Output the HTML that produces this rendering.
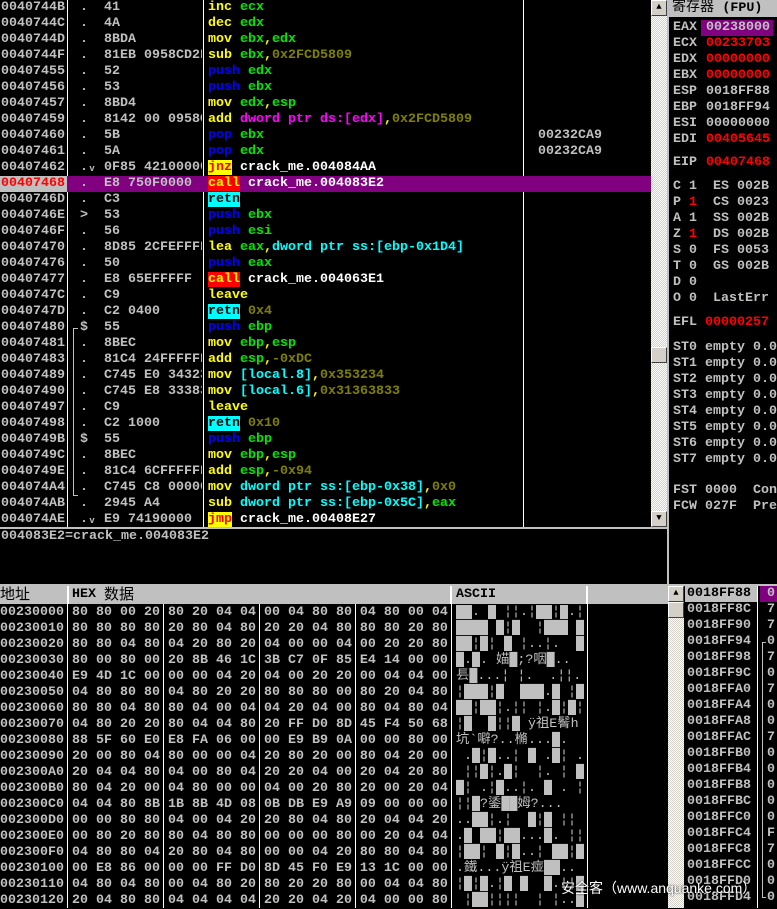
<!DOCTYPE html>
<html><head><meta charset="utf-8"><style>
*{margin:0;padding:0;box-sizing:border-box}
body{width:777px;height:908px;background:#000;position:relative;overflow:hidden;font:bold 13.33px/16px "Liberation Mono","WenQuanYi Zen Hei",monospace;color:#c0c0c0}
div,span{position:absolute;white-space:pre}
.r{left:0;width:651px;height:16px}
.a{left:1px}.d{left:80px}.h{left:104px;width:98px;overflow:hidden}.i{left:208px}.c{left:538px}
.y{position:static;color:#ffff00}.g{position:static;color:#00e800}.o{position:static;color:#808000}.b{position:static;color:#0000ff}
.m{position:static;color:#ff00ff}.cy{position:static;color:#00ffff}.w{position:static;color:#fff}
.jz{position:static;background:#ffff00;color:#ff0000}.cl{position:static;background:#ff0000;color:#ffff00}.rt{position:static;background:#00ffff;color:#000}
.vl{width:1px;background:#fff}
.sb{background:repeating-conic-gradient(#fff 0 25%,#d4d0c8 0 50%) 0 0/2px 2px}
.btn{background:#d4d0c8;border:1px solid;border-color:#fff #404040 #404040 #fff;width:16px;height:16px}
.rg{left:673px}.rv{left:706px}
</style></head><body>
<!-- disassembly -->
<div class="vl" style="left:67px;top:0;height:527px"></div>
<div class="vl" style="left:203px;top:0;height:527px"></div>
<div class="vl" style="left:523px;top:0;height:527px"></div>
<div class="r" style="top:0"><span class="a">0040744B</span><span class="d">.</span><span class="h">41</span><span class="i"><span class="y">inc</span> <span class="g">ecx</span></span></div>
<div class="r" style="top:16px"><span class="a">0040744C</span><span class="d">.</span><span class="h">4A</span><span class="i"><span class="y">dec</span> <span class="g">edx</span></span></div>
<div class="r" style="top:32px"><span class="a">0040744D</span><span class="d">.</span><span class="h">8BDA</span><span class="i"><span class="y">mov</span> <span class="g">ebx</span><span class="y">,</span><span class="g">edx</span></span></div>
<div class="r" style="top:48px"><span class="a">0040744F</span><span class="d">.</span><span class="h">81EB 0958CD2F</span><span class="i"><span class="y">sub</span> <span class="g">ebx</span><span class="y">,</span><span class="o">0x2FCD5809</span></span></div>
<div class="r" style="top:64px"><span class="a">00407455</span><span class="d">.</span><span class="h">52</span><span class="i"><span class="b">push</span> <span class="g">edx</span></span></div>
<div class="r" style="top:80px"><span class="a">00407456</span><span class="d">.</span><span class="h">53</span><span class="i"><span class="b">push</span> <span class="g">ebx</span></span></div>
<div class="r" style="top:96px"><span class="a">00407457</span><span class="d">.</span><span class="h">8BD4</span><span class="i"><span class="y">mov</span> <span class="g">edx</span><span class="y">,</span><span class="g">esp</span></span></div>
<div class="r" style="top:112px"><span class="a">00407459</span><span class="d">.</span><span class="h">8142 00 0958CD2F</span><span class="i"><span class="y">add</span> <span class="m">dword ptr ds:[edx]</span><span class="y">,</span><span class="o">0x2FCD5809</span></span></div>
<div class="r" style="top:128px"><span class="a">00407460</span><span class="d">.</span><span class="h">5B</span><span class="i"><span class="b">pop</span> <span class="g">ebx</span></span><span class="c">00232CA9</span></div>
<div class="r" style="top:144px"><span class="a">00407461</span><span class="d">.</span><span class="h">5A</span><span class="i"><span class="b">pop</span> <span class="g">edx</span></span><span class="c">00232CA9</span></div>
<div class="r" style="top:160px"><span class="a">00407462</span><span class="d">.ᵥ</span><span class="h">0F85 42100000</span><span class="i"><span class="jz">jnz</span> <span class="w">crack_me.004084AA</span></span></div>
<div class="r" style="top:176px;background:#800080"><span class="a" style="left:0;width:67px;background:#c0c0c0;color:#f00;padding-left:1px">00407468</span><span class="d">.</span><span class="h">E8 750F0000</span><span class="i"><span class="cl">call</span> <span class="w">crack_me.004083E2</span></span></div>
<div class="r" style="top:192px"><span class="a">0040746D</span><span class="d">.</span><span class="h">C3</span><span class="i"><span class="rt">retn</span></span></div>
<div class="r" style="top:208px"><span class="a">0040746E</span><span class="d">&gt;</span><span class="h">53</span><span class="i"><span class="b">push</span> <span class="g">ebx</span></span></div>
<div class="r" style="top:224px"><span class="a">0040746F</span><span class="d">.</span><span class="h">56</span><span class="i"><span class="b">push</span> <span class="g">esi</span></span></div>
<div class="r" style="top:240px"><span class="a">00407470</span><span class="d">.</span><span class="h">8D85 2CFEFFFF</span><span class="i"><span class="y">lea</span> <span class="g">eax</span><span class="y">,</span><span class="cy">dword ptr ss:[ebp-0x1D4]</span></span></div>
<div class="r" style="top:256px"><span class="a">00407476</span><span class="d">.</span><span class="h">50</span><span class="i"><span class="b">push</span> <span class="g">eax</span></span></div>
<div class="r" style="top:272px"><span class="a">00407477</span><span class="d">.</span><span class="h">E8 65EFFFFF</span><span class="i"><span class="cl">call</span> <span class="w">crack_me.004063E1</span></span></div>
<div class="r" style="top:288px"><span class="a">0040747C</span><span class="d">.</span><span class="h">C9</span><span class="i"><span class="y">leave</span></span></div>
<div class="r" style="top:304px"><span class="a">0040747D</span><span class="d">.</span><span class="h">C2 0400</span><span class="i"><span class="rt">retn</span> <span class="o">0x4</span></span></div>
<div class="r" style="top:320px"><span class="a">00407480</span><span class="d">$</span><span class="h">55</span><span class="i"><span class="b">push</span> <span class="g">ebp</span></span></div>
<div class="r" style="top:336px"><span class="a">00407481</span><span class="d">.</span><span class="h">8BEC</span><span class="i"><span class="y">mov</span> <span class="g">ebp</span><span class="y">,</span><span class="g">esp</span></span></div>
<div class="r" style="top:352px"><span class="a">00407483</span><span class="d">.</span><span class="h">81C4 24FFFFFF</span><span class="i"><span class="y">add</span> <span class="g">esp</span><span class="y">,</span><span class="o">-0xDC</span></span></div>
<div class="r" style="top:368px"><span class="a">00407489</span><span class="d">.</span><span class="h">C745 E0 34323500</span><span class="i"><span class="y">mov</span> <span class="cy">[local.8]</span><span class="y">,</span><span class="o">0x353234</span></span></div>
<div class="r" style="top:384px"><span class="a">00407490</span><span class="d">.</span><span class="h">C745 E8 33383631</span><span class="i"><span class="y">mov</span> <span class="cy">[local.6]</span><span class="y">,</span><span class="o">0x31363833</span></span></div>
<div class="r" style="top:400px"><span class="a">00407497</span><span class="d">.</span><span class="h">C9</span><span class="i"><span class="y">leave</span></span></div>
<div class="r" style="top:416px"><span class="a">00407498</span><span class="d">.</span><span class="h">C2 1000</span><span class="i"><span class="rt">retn</span> <span class="o">0x10</span></span></div>
<div style="left:73px;top:328px;width:5px;height:168px;border:1px solid #c0c0c0;border-right:none"></div>
<div class="r" style="top:432px"><span class="a">0040749B</span><span class="d">$</span><span class="h">55</span><span class="i"><span class="b">push</span> <span class="g">ebp</span></span></div>
<div class="r" style="top:448px"><span class="a">0040749C</span><span class="d">.</span><span class="h">8BEC</span><span class="i"><span class="y">mov</span> <span class="g">ebp</span><span class="y">,</span><span class="g">esp</span></span></div>
<div class="r" style="top:464px"><span class="a">0040749E</span><span class="d">.</span><span class="h">81C4 6CFFFFFF</span><span class="i"><span class="y">add</span> <span class="g">esp</span><span class="y">,</span><span class="o">-0x94</span></span></div>
<div class="r" style="top:480px"><span class="a">004074A4</span><span class="d">.</span><span class="h">C745 C8 00000000</span><span class="i"><span class="y">mov</span> <span class="cy">dword ptr ss:[ebp-0x38]</span><span class="y">,</span><span class="o">0x0</span></span></div>
<div class="r" style="top:496px"><span class="a">004074AB</span><span class="d">.</span><span class="h">2945 A4</span><span class="i"><span class="y">sub</span> <span class="cy">dword ptr ss:[ebp-0x5C]</span><span class="y">,</span><span class="g">eax</span></span></div>
<div class="r" style="top:512px"><span class="a">004074AE</span><span class="d">.ᵥ</span><span class="h">E9 74190000</span><span class="i"><span class="jz">jmp</span> <span class="w">crack_me.00408E27</span></span></div>
<!-- disasm scrollbar -->
<div class="sb" style="left:651px;top:0;width:16px;height:527px"></div>
<div class="btn" style="left:651px;top:0;font-size:9px;line-height:13px;text-align:center;color:#000">▲</div>
<div class="btn" style="left:651px;top:347px"></div>
<div class="btn" style="left:651px;top:511px;font-size:9px;line-height:13px;text-align:center;color:#000">▼</div>
<!-- separators -->
<div style="left:0;top:527px;width:669px;height:2px;background:#c0c0c0"></div>
<div style="left:667px;top:0;width:2px;height:586px;background:#c0c0c0"></div>
<div style="left:0;top:584px;width:777px;height:2px;background:#c0c0c0"></div>
<!-- registers -->
<div style="left:669px;top:0;width:108px;height:17px;background:#c0c0c0;color:#000;font-weight:normal;font-size:14px;line-height:17px;padding-left:3px;font-family:'WenQuanYi Zen Hei','Liberation Mono',monospace">寄存器 <span style="position:static;font:bold 13.33px 'Liberation Mono',monospace">(FPU)</span></div>
<div class="rg" style="top:20px">EAX</div><div style="left:701px;top:20px;width:72px;height:16px;background:#800080"></div><div class="rv" style="top:20px">00238000</div>
<div class="rg" style="top:36px">ECX</div><div class="rv" style="top:36px;color:#f00">00233703</div>
<div class="rg" style="top:52px">EDX</div><div class="rv" style="top:52px;color:#f00">00000000</div>
<div class="rg" style="top:68px">EBX</div><div class="rv" style="top:68px;color:#f00">00000000</div>
<div class="rg" style="top:84px">ESP</div><div class="rv" style="top:84px">0018FF88</div>
<div class="rg" style="top:100px">EBP</div><div class="rv" style="top:100px">0018FF94</div>
<div class="rg" style="top:116px">ESI</div><div class="rv" style="top:116px">00000000</div>
<div class="rg" style="top:132px">EDI</div><div class="rv" style="top:132px;color:#f00">00405645</div>
<div class="rg" style="top:155px">EIP</div><div class="rv" style="top:155px;color:#f00">00407468</div>
<div class="rg" style="top:179px">C 1  ES 002B</div>
<div class="rg" style="top:195px">P <span style="position:static;color:#f00">1</span>  CS 0023</div>
<div class="rg" style="top:211px">A 1  SS 002B</div>
<div class="rg" style="top:227px">Z <span style="position:static;color:#f00">1</span>  DS 002B</div>
<div class="rg" style="top:243px">S 0  FS 0053</div>
<div class="rg" style="top:259px">T 0  GS 002B</div>
<div class="rg" style="top:275px">D 0</div>
<div class="rg" style="top:291px">O 0  LastErr</div>
<div class="rg" style="top:315px">EFL <span style="position:static;color:#f00">00000257</span></div>
<div class="rg" style="top:340px">ST0 empty 0.0</div>
<div class="rg" style="top:356px">ST1 empty 0.0</div>
<div class="rg" style="top:372px">ST2 empty 0.0</div>
<div class="rg" style="top:388px">ST3 empty 0.0</div>
<div class="rg" style="top:404px">ST4 empty 0.0</div>
<div class="rg" style="top:420px">ST5 empty 0.0</div>
<div class="rg" style="top:436px">ST6 empty 0.0</div>
<div class="rg" style="top:452px">ST7 empty 0.0</div>
<div class="rg" style="top:483px">FST 0000  Con</div>
<div class="rg" style="top:499px">FCW 027F  Pre</div>
<!-- info -->
<div style="left:1px;top:529px">004083E2=crack_me.004083E2</div>
<!-- dump header -->
<div style="left:0;top:586px;width:668px;height:18px;background:#c0c0c0"></div>
<div style="left:0;top:586px;color:#000;font:normal 15px/18px 'WenQuanYi Zen Hei',sans-serif">地址</div>
<div style="left:67px;top:586px;width:2px;height:18px;background:#fff"></div>
<div style="left:72px;top:587px;color:#000;line-height:16px">HEX</div>
<div style="left:104px;top:586px;color:#000;font:normal 15px/18px 'WenQuanYi Zen Hei',sans-serif">数据</div>
<div style="left:450px;top:586px;width:2px;height:18px;background:#fff"></div>
<div style="left:456px;top:587px;color:#000;line-height:16px">ASCII</div>
<div style="left:586px;top:586px;width:2px;height:18px;background:#fff"></div>
<div class="vl" style="left:67px;top:604px;height:304px"></div>
<div class="vl" style="left:163px;top:604px;height:304px"></div>
<div class="vl" style="left:259px;top:604px;height:304px"></div>
<div class="vl" style="left:355px;top:604px;height:304px"></div>
<div class="vl" style="left:451px;top:604px;height:304px"></div>
<div class="vl" style="left:587px;top:604px;height:304px"></div>
<div style="left:0;top:605px;line-height:16px">00230000
00230010
00230020
00230030
00230040
00230050
00230060
00230070
00230080
00230090
002300A0
002300B0
002300C0
002300D0
002300E0
002300F0
00230100
00230110
00230120</div>
<div style="left:72px;top:605px;line-height:16px">80 80 00 20 80 20 04 04 00 04 80 80 04 80 00 04
80 80 80 80 20 80 04 80 20 20 04 80 80 80 20 80
80 80 04 80 04 20 80 20 04 00 00 04 00 20 20 80
80 00 80 00 20 8B 46 1C 3B C7 0F 85 E4 14 00 00
E9 4D 1C 00 00 00 04 20 04 00 20 20 00 04 04 00
04 80 80 80 04 80 20 20 80 80 80 00 80 20 04 80
80 80 04 80 80 04 00 04 04 20 04 00 80 04 80 04
04 80 20 20 80 04 04 80 20 FF D0 8D 45 F4 50 68
88 5F 60 E0 E8 FA 06 00 00 E9 B9 0A 00 00 80 00
20 00 80 04 80 00 00 04 20 80 20 00 80 04 20 00
20 04 04 80 04 00 80 04 20 20 04 00 20 04 20 80
80 04 20 00 04 80 00 00 04 00 20 80 20 00 20 04
04 04 80 8B 1B 8B 4D 08 0B DB E9 A9 09 00 00 00
00 00 80 80 04 00 04 20 20 80 04 80 20 04 04 20
00 80 20 80 80 04 80 80 00 00 00 80 00 20 04 04
04 80 80 04 20 80 04 80 00 00 04 20 80 80 04 80
00 E8 86 00 00 00 FF D0 8D 45 F0 E9 13 1C 00 00
04 80 04 80 00 04 80 20 80 20 20 80 00 04 04 80
20 04 80 80 04 04 04 04 20 20 04 20 04 00 00 80</div>
<div style="left:456px;top:605px;line-height:16px;width:130px;overflow:hidden;font-family:'Liberation Mono','WenQuanYi Zen Hei',monospace;font-weight:normal">██. █ ¦¦.¦██¦█.¦
████ █¦█  ¦███ █
██¦█¦ █ ¦..¦.  █
█.█. 媌█;?咽█..
镸█...¦ ¦.  .¦¦.
¦███¦█  ███.█ ¦█
██¦██¦.¦¦ ¦.█¦█¦
¦█  █¦¦█ ÿ祖E鬌h
坑`噼?..樇...█.
 .█¦█..¦ █ .█¦ .
 ¦¦█¦.█¦  ¦. ¦ █
█¦ .¦█..¦. █ . ¦
¦¦█?鋈██姆?...
..██¦.¦  █¦█ ¦¦ 
.█ ██¦██...█. ¦¦
¦██¦ █¦█..¦ ██¦█
.鐵...ÿ祖E痖██..
¦█¦█.¦█ █  █.¦¦█
 ¦██¦¦¦¦  ¦ ¦..█</div>
<!-- stack -->
<div class="sb" style="left:668px;top:586px;width:16px;height:322px"></div>
<div class="btn" style="left:668px;top:586px;font-size:9px;line-height:13px;text-align:center;color:#000">▲</div>
<div class="btn" style="left:668px;top:602px"></div>
<div style="left:685px;top:586px;width:72px;height:16px;background:#c0c0c0"></div>
<div style="left:760px;top:586px;width:17px;height:16px;background:#800080"></div>
<div class="vl" style="left:757px;top:586px;height:322px"></div>
<div style="left:687px;top:586px;line-height:16px"><span style="position:static;color:#000">0018FF88</span>
0018FF8C
0018FF90
0018FF94
0018FF98
0018FF9C
0018FFA0
0018FFA4
0018FFA8
0018FFAC
0018FFB0
0018FFB4
0018FFB8
0018FFBC
0018FFC0
0018FFC4
0018FFC8
0018FFCC
0018FFD0
0018FFD4</div>
<div style="left:767px;top:586px;line-height:16px">0
7
7
0
7
0
7
0
0
7
0
0
0
0
0
F
7
0
0
0</div>
<div style="left:762px;top:642px;width:4px;height:256px;border:1px solid #c0c0c0;border-right:none"></div>
<!-- watermark -->
<div style="left:561px;top:879px;color:#fff;font:normal 14px/18px 'Liberation Sans','Noto Sans CJK SC',sans-serif;text-shadow:0 0 2px #000">安全客（www.anquanke.com）</div>
</body></html>
